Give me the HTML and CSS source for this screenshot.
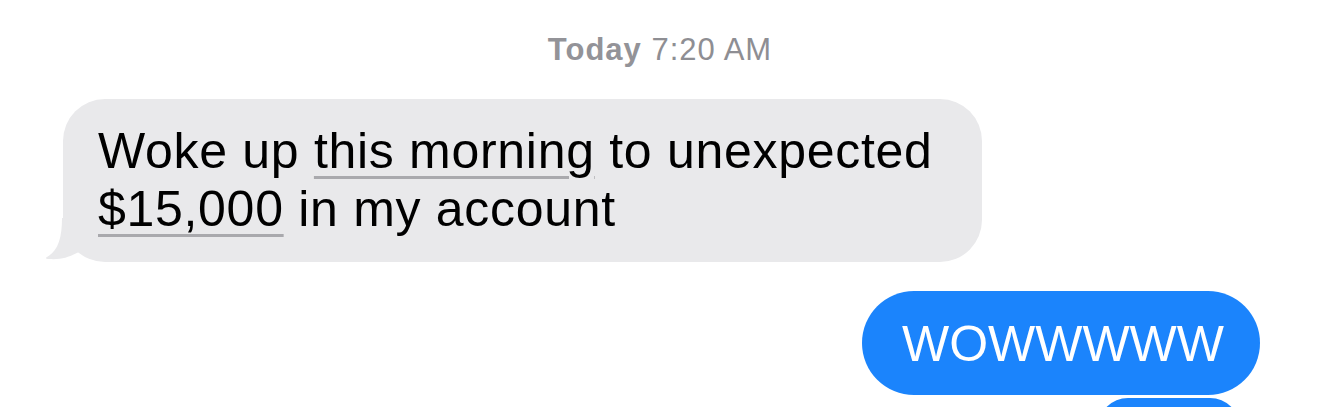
FILE: index.html
```html
<!DOCTYPE html>
<html>
<head>
<meta charset="utf-8">
<link rel="stylesheet" href="styles.css">
</head>
<body>
<div class="thread">
  <div class="stamp"><span class="day">Today</span> 7:20 AM</div>
  <div class="row row-in">
    <div class="bubble in">
      <svg class="tail" width="34" height="44" viewBox="0 0 34 44"><path d="M34 0 L34 34 C26 38 18 42 4 41 C1 41 0 40 2 39 C13 33 17 20 17 0 Z" fill="#e9e9eb"/></svg>
      <span class="line">Woke up <span class="link">this morning</span> to unexpected</span>
      <span class="line"><span class="link">$15,000</span> in my account</span>
    </div>
  </div>
  <div class="row row-out">
    <div class="bubble out">WOWWWWW</div>
  </div>
  <div class="row row-out row-next">
    <div class="bubble out next"></div>
  </div>
</div>
</body>
</html>
```
FILE: styles.css
```css
html, body {
  margin: 0;
  padding: 0;
  background: #ffffff;
}
body {
  width: 1320px;
  height: 410px;
  overflow: hidden;
  font-family: "Liberation Sans", Arial, sans-serif;
}
.thread {
  display: flex;
  flex-direction: column;
}
.stamp {
  text-align: center;
  color: #8e8e93;
  font-size: 31px;
  line-height: 36px;
  letter-spacing: 1px;
  padding-top: 32px;
}
.stamp .day {
  font-weight: bold;
  color: #939398;
}
.row {
  display: flex;
}
.row-in {
  padding-left: 63px;
  margin-top: 31px;
}
.row-out {
  justify-content: flex-end;
  padding-right: 60px;
}
.row-next {
  height: 12px;
  overflow: hidden;
  align-items: flex-start;
}
.bubble {
  font-size: 50px;
  line-height: 58px;
  white-space: nowrap;
}
.bubble.in {
  position: relative;
  background: #e9e9eb;
  color: #000;
  width: 919px;
  height: 163px;
  box-sizing: border-box;
  padding: 23px 35px 0 35px;
  border-radius: 42px;
  display: flex;
  flex-direction: column;
  letter-spacing: 0.7px;
}
.tail {
  position: absolute;
  left: -18px;
  bottom: 0;
}
.line {
  display: block;
}
.link {
  text-decoration: underline;
  text-decoration-color: #a9a9ad;
  text-decoration-thickness: 3px;
  text-underline-offset: 8px;
}
.bubble.out {
  background: #1b84fc;
  color: #fff;
  height: 104px;
  box-sizing: border-box;
  padding: 24px 36px 0 40px;
  border-radius: 52px;
  margin-top: 29px;
}
.bubble.next {
  width: 142px;
  height: 60px;
  flex-shrink: 0;
  margin-top: 3px;
  margin-right: 20px;
  padding: 0;
}
```
